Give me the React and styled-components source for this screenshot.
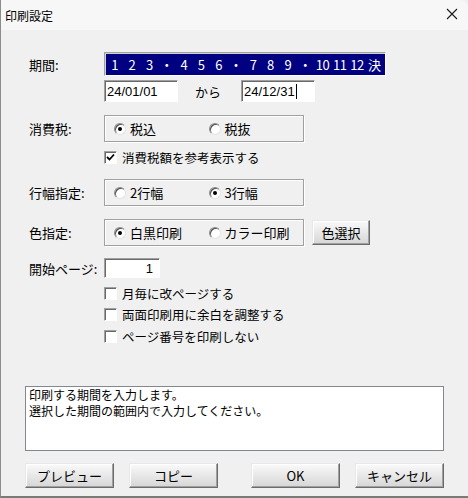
import styled, { createGlobalStyle, css } from 'styled-components';

const GlobalStyle = createGlobalStyle`
  html, body {
    margin: 0;
    padding: 0;
    background: #f0f0f0;
  }
  * {
    box-sizing: border-box;
  }
`;

const FONT = `'Noto Sans CJK JP', 'Liberation Sans', sans-serif`;

const PERIODS = ['1', '2', '3', '・', '4', '5', '6', '・', '7', '8', '9', '・', '10', '11', '12', '決'];

const Radio = ({ checked, label }) => (
  <StOption>
    <StRadioDot $checked={checked} />
    <span>{label}</span>
  </StOption>
);

const Check = ({ checked, label }) => (
  <StCheckRow>
    <StCheckBox>
      {checked && (
        <svg width="9" height="9" viewBox="0 0 9 9">
          <path d="M1 4 L3.5 6.5 L8 1.5" stroke="#000" strokeWidth="1.8" fill="none" />
        </svg>
      )}
    </StCheckBox>
    <span>{label}</span>
  </StCheckRow>
);

const App = () => {
  return (
    <>
      <GlobalStyle />
      <StWindow>
        <StTitleBar>
          <span>印刷設定</span>
          <StClose>
            <svg width="12" height="12" viewBox="0 0 12 12">
              <path d="M1 1 L11 11 M11 1 L1 11" stroke="#1a1a1a" strokeWidth="1.1" />
            </svg>
          </StClose>
        </StTitleBar>

        <StBody>
          <StRow $mt={22} $h={24}>
            <StLabel>期間:</StLabel>
            <StPeriodBar>
              {PERIODS.map((p, i) => (
                <span key={i}>{p}</span>
              ))}
            </StPeriodBar>
          </StRow>

          <StRow $mt={4} $h={22}>
            <StLabel />
            <StDateInput>24/01/01</StDateInput>
            <StFrom>から</StFrom>
            <StDateInput>
              24/12/31<StCaret />
            </StDateInput>
          </StRow>

          <StRow $mt={13} $h={27}>
            <StLabel>消費税:</StLabel>
            <StGroup>
              <Radio checked label="税込" />
              <Radio label="税抜" />
            </StGroup>
          </StRow>

          <StRow $mt={8} $h={14}>
            <StLabel />
            <Check checked label="消費税額を参考表示する" />
          </StRow>

          <StRow $mt={15} $h={27}>
            <StLabel>行幅指定:</StLabel>
            <StGroup>
              <Radio label="2行幅" />
              <Radio checked label="3行幅" />
            </StGroup>
          </StRow>

          <StRow $mt={13} $h={27}>
            <StLabel>色指定:</StLabel>
            <StGroup>
              <Radio checked label="白黒印刷" />
              <Radio label="カラー印刷" />
            </StGroup>
            <StButton $w={58} $h={25} $ml={8}>
              色選択
            </StButton>
          </StRow>

          <StRow $mt={12} $h={20}>
            <StLabel>開始ページ:</StLabel>
            <StPageInput>1</StPageInput>
          </StRow>

          <StRow $mt={8} $h={14}>
            <StLabel />
            <Check label="月毎に改ページする" />
          </StRow>
          <StRow $mt={7} $h={14}>
            <StLabel />
            <Check label="両面印刷用に余白を調整する" />
          </StRow>
          <StRow $mt={8} $h={14}>
            <StLabel />
            <Check label="ページ番号を印刷しない" />
          </StRow>

          <StMessage>
            <StMessageLine>印刷する期間を入力します。</StMessageLine>
            <StMessageLine>選択した期間の範囲内で入力してください。</StMessageLine>
          </StMessage>

          <StFooter>
            <StButtonGroup>
              <StButton $w={89} $h={25}>プレビュー</StButton>
              <StButton $w={89} $h={25}>コピー</StButton>
            </StButtonGroup>
            <StButtonGroup>
              <StButton $w={89} $h={25}>OK</StButton>
              <StButton $w={89} $h={25}>キャンセル</StButton>
            </StButtonGroup>
          </StFooter>
        </StBody>
      </StWindow>
    </>
  );
};

export default App;

const sunken = css`
  border: 1px solid;
  border-color: #a0a0a0 #ffffff #ffffff #a0a0a0;
  box-shadow: inset 1px 1px 0 #696969;
`;

const StWindow = styled.div`
  width: 468px;
  height: 498px;
  background: #f0f0f0;
  border-left: 1px solid #8c8c8c;
  border-bottom: 2px solid #7a7a7a;
  border-top-right-radius: 8px;
  overflow: hidden;
  font-family: ${FONT};
  color: #000;
  display: flex;
  flex-direction: column;
`;

const StTitleBar = styled.div`
  height: 30px;
  flex-shrink: 0;
  display: flex;
  align-items: center;
  justify-content: space-between;
  padding: 0 10px 0 4px;
  background: #f7f7f7;
  font-size: 12px;
`;

const StClose = styled.div`
  width: 12px;
  height: 12px;
  display: flex;
  margin-top: -2px;
`;

const StBody = styled.div`
  display: flex;
  flex-direction: column;
  padding: 0 24px;
`;

const StRow = styled.div`
  display: flex;
  align-items: center;
  height: ${({ $h }) => $h}px;
  margin-top: ${({ $mt }) => $mt}px;
`;

const StLabel = styled.div`
  width: 79px;
  flex-shrink: 0;
  padding-left: 4px;
  font-size: 13px;
  white-space: nowrap;
`;

const StPeriodBar = styled.div`
  width: 282px;
  height: 24px;
  background: #000080;
  border: 1px solid;
  border-color: #a0a0a0 #ffffff #ffffff #a0a0a0;
  box-shadow: inset 1px 1px 0 #d0d0d0;
  display: grid;
  grid-template-columns: repeat(16, 1fr);
  align-items: center;
  justify-items: center;
  padding: 0 2px 0 1px;
  color: #ffffff;
  font-size: 13px;
  letter-spacing: -0.5px;
`;

const StDateInput = styled.div`
  ${sunken};
  width: 74px;
  height: 22px;
  background: #fff;
  display: flex;
  align-items: center;
  padding-left: 2px;
  font-family: 'Liberation Sans', ${FONT};
  font-size: 13px;
`;

const StCaret = styled.span`
  display: inline-block;
  width: 1px;
  height: 15px;
  background: #000;
  margin-left: 1px;
`;

const StFrom = styled.span`
  font-size: 13px;
  margin: 0 20px 0 17px;
`;

const StGroup = styled.div`
  width: 200px;
  height: 27px;
  border: 1px solid #a0a0a0;
  box-shadow: 1px 1px 0 #ffffff, inset 1px 1px 0 #ffffff;
  display: flex;
  align-items: center;
  padding-left: 9px;
`;

const StOption = styled.div`
  width: 96px;
  display: flex;
  align-items: center;
  gap: 4px;
  font-size: 13px;
`;

const StRadioDot = styled.span`
  width: 12px;
  height: 12px;
  border-radius: 50%;
  background: #fff;
  border: 1px solid;
  border-color: #8a8a8a #e3e3e3 #e3e3e3 #8a8a8a;
  box-shadow: inset 1px 1px 0 #505050;
  display: flex;
  align-items: center;
  justify-content: center;
  flex-shrink: 0;

  &::after {
    content: '';
    width: 4px;
    height: 4px;
    border-radius: 50%;
    background: #000;
    display: ${({ $checked }) => ($checked ? 'block' : 'none')};
  }
`;

const StCheckRow = styled.div`
  display: flex;
  align-items: center;
  gap: 5px;
  font-size: 12.5px;
`;

const StCheckBox = styled.span`
  ${sunken};
  width: 13px;
  height: 13px;
  background: #fff;
  display: flex;
  align-items: center;
  justify-content: center;
  flex-shrink: 0;
`;

const StPageInput = styled.div`
  ${sunken};
  width: 56px;
  height: 20px;
  background: #fff;
  display: flex;
  align-items: center;
  justify-content: flex-end;
  padding-right: 6px;
  font-family: 'Liberation Sans', ${FONT};
  font-size: 13px;
`;

const StMessage = styled.div`
  margin-top: 43px;
  height: 65px;
  background: #fff;
  border: 1px solid #828790;
  padding: 0 3px;
  display: flex;
  flex-direction: column;
`;

const StMessageLine = styled.div`
  height: 15.5px;
  font-size: 12px;
  line-height: 15.5px;
  white-space: nowrap;
`;

const StFooter = styled.div`
  margin-top: 12px;
  display: flex;
  justify-content: space-between;
`;

const StButtonGroup = styled.div`
  display: flex;
  gap: 15px;
`;

const StButton = styled.button.attrs({ type: 'button' })`
  width: ${({ $w }) => $w}px;
  height: ${({ $h }) => $h}px;
  margin-left: ${({ $ml }) => $ml || 0}px;
  flex-shrink: 0;
  font-family: ${FONT};
  font-size: 13px;
  color: #000;
  background: linear-gradient(#fafafa, #e6e6e6 55%, #d6d6d6);
  border: 1px solid;
  border-color: #e8e8e8 #6b6b6b #6b6b6b #e8e8e8;
  box-shadow: inset -1px -1px 0 #a0a0a0, inset 1px 1px 0 #ffffff;
  padding: 0;
  display: flex;
  align-items: center;
  justify-content: center;
`;
